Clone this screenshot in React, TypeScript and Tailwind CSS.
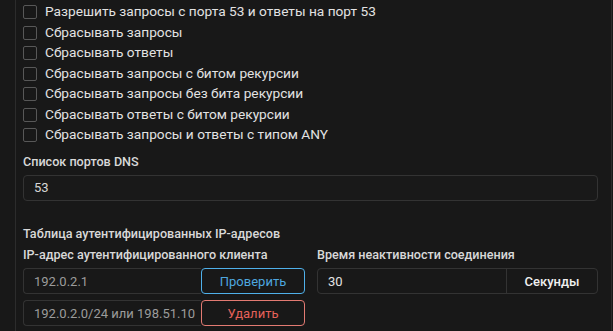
const options = [
  'Разрешить запросы с порта 53 и ответы на порт 53',
  'Сбрасывать запросы',
  'Сбрасывать ответы',
  'Сбрасывать запросы с битом рекурсии',
  'Сбрасывать запросы без бита рекурсии',
  'Сбрасывать ответы с битом рекурсии',
  'Сбрасывать запросы и ответы с типом ANY',
];

const App = () => {
  return (
    <div className="h-[331px] w-[613px] overflow-hidden bg-[#181818] font-['Roboto',sans-serif] text-[#dcdcdc]">
      <div className="flex h-full">
        <div className="w-[15px] shrink-0" />
        <div className="w-px shrink-0 bg-[#2c2c2c]" />
        <div className="min-w-0 flex-1 pl-[7px] pr-[13px]">
          {/* Checkboxes */}
          <div className="flex flex-col pt-[2px]">
            {options.map((o) => (
              <label key={o} className="flex h-[20.5px] items-center gap-[8px] whitespace-nowrap text-[13.7px] leading-none text-[#e2e2e2]">
                <span className="h-[14px] w-[14px] shrink-0 rounded-[2px] border border-[#585858] bg-[#181818]" />
                <span>{o}</span>
              </label>
            ))}
          </div>

          {/* DNS ports */}
          <div className="mt-[10px] text-[12.6px] font-medium leading-none text-[#d8d8d8]">Список портов DNS</div>
          <div className="mt-[7px] flex h-[26px] items-center rounded-[4px] border border-[#333] bg-[#191919] px-[10px] text-[13px] text-[#d6d6d6]">
            53
          </div>

          {/* Auth table */}
          <div className="mt-[27px] whitespace-nowrap text-[12.6px] font-medium leading-none text-[#d8d8d8]">
            Таблица аутентифицированных IP-адресов
          </div>
          <div className="mt-[8px] flex gap-[12px]">
            <div className="flex w-[282px] flex-col">
              <div className="whitespace-nowrap text-[12.6px] font-medium leading-none text-[#d8d8d8]">IP-адрес аутентифицированного клиента</div>
              <div className="mt-[7px] flex h-[26px]">
                <div className="flex min-w-0 flex-1 items-center overflow-hidden whitespace-nowrap rounded-l-[4px] border border-r-0 border-[#333] px-[10px] text-[13px] text-[#9c9c9c]">
                  192.0.2.1
                </div>
                <button className="w-[104px] shrink-0 rounded-[4px] border border-[#4fb0ea] text-[13px] text-[#4ea6df]">Проверить</button>
              </div>
              <div className="mt-[6px] flex h-[26px]">
                <div className="flex min-w-0 flex-1 items-center overflow-hidden whitespace-nowrap rounded-l-[4px] border border-r-0 border-[#333] px-[10px] text-[13px] text-[#9c9c9c]">
                  192.0.2.0/24 или 198.51.10
                </div>
                <button className="w-[104px] shrink-0 rounded-[4px] border border-[#e27a72] text-[13px] text-[#e5615a]">Удалить</button>
              </div>
            </div>
            <div className="flex min-w-0 flex-1 flex-col">
              <div className="whitespace-nowrap text-[12.6px] font-medium leading-none text-[#d8d8d8]">Время неактивности соединения</div>
              <div className="mt-[7px] flex h-[26px] rounded-[4px] border border-[#333]">
                <div className="flex flex-1 items-center px-[10px] text-[13px] text-[#e2e2e2]">30</div>
                <div className="flex w-[91px] items-center justify-center border-l border-[#333] text-[13px] font-medium text-[#f0f0f0]">
                  Секунды
                </div>
              </div>
            </div>
          </div>
        </div>
        <div className="w-px shrink-0 bg-[#2c2c2c]" />
        <div className="w-px shrink-0" />
      </div>
    </div>
  );
};

export default App;
